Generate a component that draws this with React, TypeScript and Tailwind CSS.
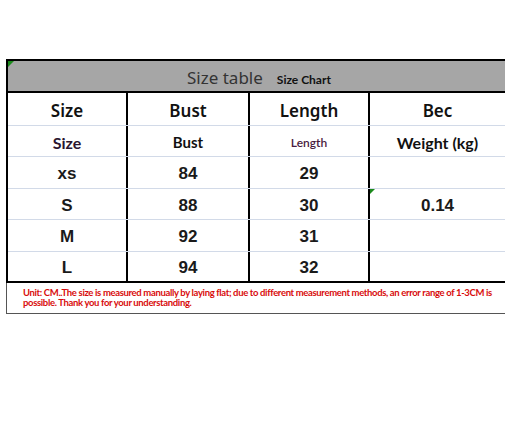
import React from "react";

const cellBase = "flex items-center justify-center pt-[3px]";
const vline = "border-r-2 border-black";

function Row({ cells, h, bottom }: { cells: React.ReactNode[]; h: string; bottom: string }) {
  const widths = ["w-[120px]", "w-[122px]", "w-[120px]", "flex-1"];
  return (
    <div className={`flex ${h} ${bottom}`}>
      {cells.map((c, i) => (
        <div key={i} className={`${cellBase} ${widths[i]} ${i < 3 ? vline : ""} relative`}>
          {c}
        </div>
      ))}
    </div>
  );
}

export default function App() {
  const head = "font-['Noto_Sans',sans-serif] font-semibold text-[17px] text-[#111]";
  const num = "font-['Liberation_Sans',Arial,sans-serif] font-bold text-[17px] text-[#1a1a1a]";
  return (
    <div className="w-[507px] h-[429px] bg-white relative overflow-hidden">
      <div className="pt-[59px] pl-[6px]">
        <div className="w-[499px] border-l-2 border-black">
          <div className="relative h-[34px] bg-[#a6a6a6] border-y-2 border-black flex items-center pt-[3px]">
            <div className="absolute left-0 top-0 w-0 h-0 border-t-[6px] border-r-[6px] border-t-[#1c8a1c] border-r-transparent" />
            <div className="flex items-baseline pl-[179px]">
              <span className="font-['Noto_Sans',sans-serif] text-[17px] text-[#333]">Size table</span>
              <span className="ml-[14px] font-['Lato',sans-serif] font-bold text-[12px] text-[#111]">Size Chart</span>
            </div>
          </div>
          <Row
            h="h-[33px]"
            bottom="border-b border-[#d2dae8]"
            cells={[
              <span className={head}>Size</span>,
              <span className={head}>Bust</span>,
              <span className={head}>Length</span>,
              <span className={head}>Bec</span>,
            ]}
          />
          <Row
            h="h-[31px]"
            bottom="border-b border-[#d2dae8]"
            cells={[
              <span className="font-['Lato',sans-serif] font-bold text-[16px] text-[#2a1530]">Size</span>,
              <span className="font-['Lato',sans-serif] font-bold text-[15px] text-[#111]">Bust</span>,
              <span className="font-['Lato',sans-serif] font-semibold text-[12px] text-[#4a1c3e]">Length</span>,
              <span className="font-['Lato',sans-serif] font-bold text-[16px] text-[#111]">Weight (kg)</span>,
            ]}
          />
          <Row
            h="h-[32px]"
            bottom="border-b border-[#d2dae8]"
            cells={[
              <span className={num}>xs</span>,
              <span className={num}>84</span>,
              <span className={num}>29</span>,
              <span />,
            ]}
          />
          <Row
            h="h-[31px]"
            bottom="border-b border-[#d2dae8]"
            cells={[
              <span className={num}>S</span>,
              <span className={num}>88</span>,
              <span className={num}>30</span>,
              <>
                <div className="absolute left-0 top-0 w-0 h-0 border-t-[5px] border-r-[5px] border-t-[#1c8a1c] border-r-transparent" />
                <span className={num}>0.14</span>
              </>,
            ]}
          />
          <Row
            h="h-[32px]"
            bottom="border-b border-[#d2dae8]"
            cells={[
              <span className={num}>M</span>,
              <span className={num}>92</span>,
              <span className={num}>31</span>,
              <span />,
            ]}
          />
          <Row
            h="h-[31px]"
            bottom="border-b-2 border-black"
            cells={[
              <span className={num}>L</span>,
              <span className={num}>94</span>,
              <span className={num}>32</span>,
              <span />,
            ]}
          />
        </div>
        <div className="w-[499px] h-[31px] border-l border-b border-[#555] pl-[16px] pr-[6px] pt-[5px] font-['Lato',sans-serif] font-bold text-[9.5px] tracking-[-0.35px] leading-[10px] text-[#d80c0c]">
          Unit: CM..The size is measured manually by laying flat; due to different measurement methods, an error range of 1-3CM is possible. Thank you for your understanding.
        </div>
      </div>
    </div>
  );
}
